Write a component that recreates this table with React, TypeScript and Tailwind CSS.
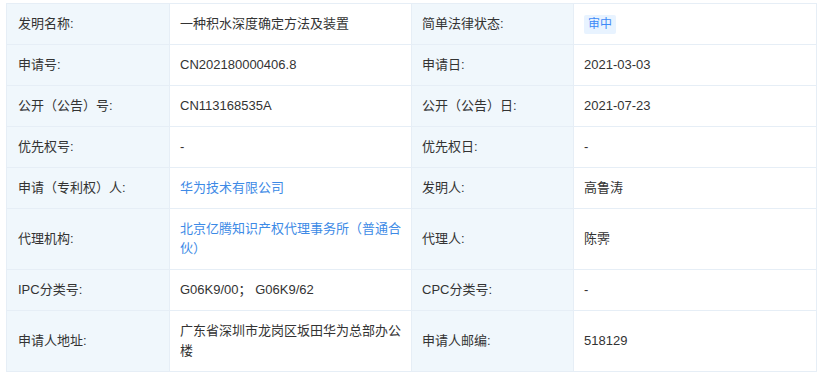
import React from 'react';

type Cell = { label: string; value: React.ReactNode };

const font = { fontFamily: '"Liberation Sans", "Noto Sans CJK SC", sans-serif' };

const Link: React.FC<{ children: React.ReactNode }> = ({ children }) => (
  <a className="text-[#3d8ae6] cursor-pointer">{children}</a>
);

const StatusBadge: React.FC<{ text: string }> = ({ text }) => (
  <span className="inline-block align-middle px-[4px] h-[19px] leading-[19px] text-[12px] rounded-[2px] bg-[#e8f3ff] text-[#3d8af7]">
    {text}
  </span>
);

const rows: [Cell, Cell][] = [
  [
    { label: '发明名称:', value: '一种积水深度确定方法及装置' },
    { label: '简单法律状态:', value: <StatusBadge text="审中" /> },
  ],
  [
    { label: '申请号:', value: 'CN202180000406.8' },
    { label: '申请日:', value: '2021-03-03' },
  ],
  [
    { label: '公开（公告）号:', value: 'CN113168535A' },
    { label: '公开（公告）日:', value: '2021-07-23' },
  ],
  [
    { label: '优先权号:', value: '-' },
    { label: '优先权日:', value: '-' },
  ],
  [
    { label: '申请（专利权）人:', value: <Link>华为技术有限公司</Link> },
    { label: '发明人:', value: '高鲁涛' },
  ],
  [
    { label: '代理机构:', value: <Link>北京亿腾知识产权代理事务所（普通合伙）</Link> },
    { label: '代理人:', value: '陈霁' },
  ],
  [
    { label: 'IPC分类号:', value: 'G06K9/00； G06K9/62' },
    { label: 'CPC分类号:', value: '-' },
  ],
  [
    { label: '申请人地址:', value: '广东省深圳市龙岗区坂田华为总部办公楼' },
    { label: '申请人邮编:', value: '518129' },
  ],
];

const labelCls = 'border border-[#e6eef6] bg-[#f0f7fc] px-[10px] py-[10px] text-left align-middle font-normal';
const valueCls = 'border border-[#e6eef6] bg-white px-[10px] py-[10px] text-left align-middle';

export default function App() {
  return (
    <div className="w-[820px] h-[373px] bg-white overflow-hidden pt-[3px] pl-[6px]" style={font}>
      <table className="w-[810px] border-collapse table-fixed text-[13px] leading-[20px] text-[#333333]">
        <colgroup>
          <col className="w-[163px]" />
          <col className="w-[242px]" />
          <col className="w-[162px]" />
          <col className="w-[243px]" />
        </colgroup>
        <tbody>
          {rows.map(([a, b], i) => (
            <tr key={i}>
              <th className={`${labelCls} pl-[11px]`}>{a.label}</th>
              <td className={valueCls}>{a.value}</td>
              <th className={labelCls}>{b.label}</th>
              <td className={valueCls}>{b.value}</td>
            </tr>
          ))}
        </tbody>
      </table>
    </div>
  );
}
